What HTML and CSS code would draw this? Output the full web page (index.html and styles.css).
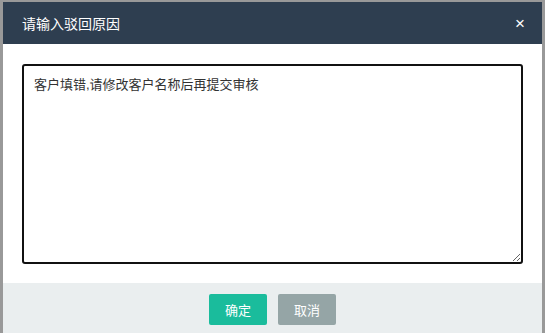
FILE: index.html
```html
<!DOCTYPE html>
<html lang="zh-CN">
<head>
  <meta charset="UTF-8" />
  <title>请输入驳回原因</title>
  <link rel="stylesheet" href="styles.css">
</head>
<body>
  <div class="dialog">
    <div class="dialog-header">
      <span class="dialog-title">请输入驳回原因</span>
      <span class="dialog-close">×</span>
    </div>
    <div class="dialog-body">
      <textarea class="reason">客户填错,请修改客户名称后再提交审核</textarea>
    </div>
    <div class="dialog-footer">
      <button class="btn btn-ok">确定</button>
      <button class="btn btn-cancel">取消</button>
    </div>
  </div>
</body>
</html>
```

FILE: styles.css
```css
html, body {
  margin: 0;
  height: 100%;
  background: #999;
  font-family: "Liberation Sans", "Noto Sans CJK SC", sans-serif;
  overflow: hidden;
}
body {
  display: flex;
  flex-direction: column;
  padding: 2px 3px 0 3px;
  box-sizing: border-box;
}
.dialog {
  flex: 1;
  background: #fff;
  display: flex;
  flex-direction: column;
}
.dialog-header {
  height: 42px;
  flex-shrink: 0;
  background: #2e3e50;
  color: #fff;
  display: flex;
  align-items: center;
  justify-content: space-between;
  padding: 0 17px 0 19px;
}
.dialog-title {
  font-size: 14px;
}
.dialog-close {
  font-size: 17px;
  line-height: 1;
}
.dialog-body {
  padding: 20px 19px 19px 19px;
}
.reason {
  display: block;
  width: 100%;
  height: 200px;
  box-sizing: border-box;
  border: 2px solid #111;
  border-radius: 3px;
  padding: 8px 10px;
  font-family: "Liberation Sans", "Noto Sans CJK SC", sans-serif;
  font-size: 13px;
  color: #333;
  outline: none;
}
.dialog-footer {
  flex: 1;
  background: #eaeeef;
  display: flex;
  justify-content: center;
  align-items: flex-start;
  gap: 11px;
  padding-top: 11px;
}
.btn {
  width: 58px;
  height: 31px;
  border: none;
  border-radius: 2px;
  color: #fff;
  font-size: 13px;
  font-family: "Liberation Sans", "Noto Sans CJK SC", sans-serif;
  padding: 0;
}
.btn-ok {
  background: #1abc9c;
}
.btn-cancel {
  background: #95a5a6;
}
```
